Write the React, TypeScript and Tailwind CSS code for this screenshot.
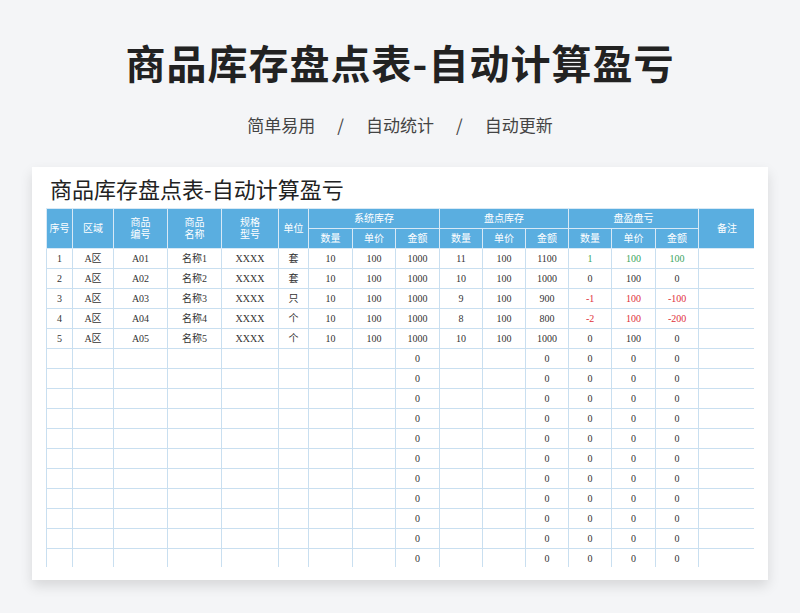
const widths = [26, 41, 54, 54, 57, 30, 44, 43, 44, 43, 43, 43, 43, 44, 43, 57]

type Cell = { v: string; c?: string }
const g = "text-[#3aa55e]"
const r = "text-[#e0313a]"

const data: Cell[][] = [
  ["1", "A区", "A01", "名称1", "XXXX", "套", "10", "100", "1000", "11", "100", "1100"].map((v) => ({ v })).concat([{ v: "1", c: g }, { v: "100", c: g }, { v: "100", c: g }, { v: "" }]),
  ["2", "A区", "A02", "名称2", "XXXX", "套", "10", "100", "1000", "10", "100", "1000", "0", "100", "0", ""].map((v) => ({ v })),
  ["3", "A区", "A03", "名称3", "XXXX", "只", "10", "100", "1000", "9", "100", "900"].map((v) => ({ v })).concat([{ v: "-1", c: r }, { v: "100", c: r }, { v: "-100", c: r }, { v: "" }]),
  ["4", "A区", "A04", "名称4", "XXXX", "个", "10", "100", "1000", "8", "100", "800"].map((v) => ({ v })).concat([{ v: "-2", c: r }, { v: "100", c: r }, { v: "-200", c: r }, { v: "" }]),
  ["5", "A区", "A05", "名称5", "XXXX", "个", "10", "100", "1000", "10", "100", "1000", "0", "100", "0", ""].map((v) => ({ v })),
]
for (let i = 0; i < 11; i++) {
  data.push(["", "", "", "", "", "", "", "", "0", "", "", "0", "0", "0", "0", ""].map((v) => ({ v })))
}

const th = "border border-[#d8e9f6] bg-[#5aaee0] text-white font-normal text-[10px] leading-[12px]"

export default function App() {
  return (
    <div className="w-[800px] h-[613px] bg-[#f4f5f7] flex flex-col items-center overflow-hidden" style={{ fontFamily: '"Liberation Serif", "Noto Sans CJK SC", serif' }}>
      <h1 className="mt-[36px] text-[40px] leading-[52px] font-bold text-[#222] tracking-[1px]" style={{ fontFamily: '"Noto Sans CJK SC", sans-serif' }}>
        商品库存盘点表-自动计算盈亏
      </h1>
      <div className="mt-[25px] flex gap-[22px] text-[17px] leading-[24px] text-[#444]" style={{ fontFamily: '"Noto Sans CJK SC", sans-serif' }}>
        <span>简单易用</span><span>/</span><span>自动统计</span><span>/</span><span>自动更新</span>
      </div>
      <div className="mt-[30px] w-[736px] h-[413px] bg-white shadow-[0_6px_12px_rgba(0,0,0,0.12)] px-[14px] overflow-hidden">
        <div className="h-[41px] pl-[4px] pt-[7px] text-[22px] leading-[28px] text-[#222]" style={{ fontFamily: '"Noto Sans CJK SC", sans-serif' }}>
          商品库存盘点表-自动计算盈亏
        </div>
        <div className="h-[359px] overflow-hidden">
          <table className="table-fixed border-collapse w-[709px] text-[10px] text-[#333]">
            <colgroup>
              {widths.map((w, i) => <col key={i} style={{ width: w }} />)}
            </colgroup>
            <thead>
              <tr className="h-[20px]">
                <th rowSpan={2} className={th}>序号</th>
                <th rowSpan={2} className={th}>区域</th>
                <th rowSpan={2} className={th}>商品<br />编号</th>
                <th rowSpan={2} className={th}>商品<br />名称</th>
                <th rowSpan={2} className={th}>规格<br />型号</th>
                <th rowSpan={2} className={th}>单位</th>
                <th colSpan={3} className={th}>系统库存</th>
                <th colSpan={3} className={th}>盘点库存</th>
                <th colSpan={3} className={th}>盘盈盘亏</th>
                <th rowSpan={2} className={th}>备注</th>
              </tr>
              <tr className="h-[20px]">
                {["数量", "单价", "金额", "数量", "单价", "金额", "数量", "单价", "金额"].map((t, i) => (
                  <th key={i} className={th}>{t}</th>
                ))}
              </tr>
            </thead>
            <tbody>
              {data.map((row, i) => (
                <tr key={i} className="h-[20px]">
                  {row.map((c, j) => (
                    <td key={j} className={`border border-[#c9dff0] text-center p-0 leading-[19px] ${c.c ?? ""}`}>{c.v}</td>
                  ))}
                </tr>
              ))}
            </tbody>
          </table>
        </div>
      </div>
    </div>
  )
}
